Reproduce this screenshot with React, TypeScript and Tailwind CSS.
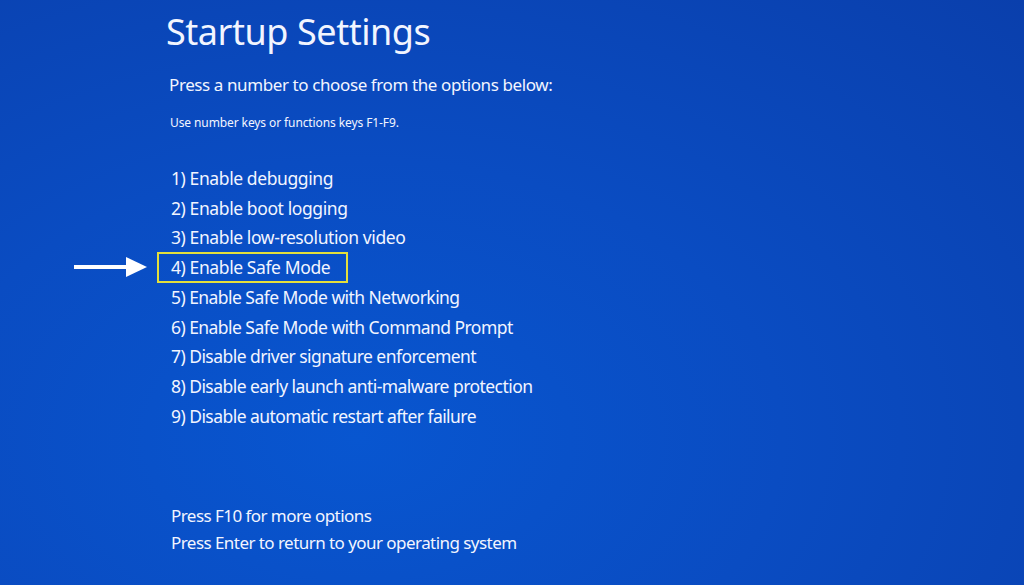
import React from "react";

const options = [
  "1) Enable debugging",
  "2) Enable boot logging",
  "3) Enable low-resolution video",
  "4) Enable Safe Mode",
  "5) Enable Safe Mode with Networking",
  "6) Enable Safe Mode with Command Prompt",
  "7) Disable driver signature enforcement",
  "8) Disable early launch anti-malware protection",
  "9) Disable automatic restart after failure",
];

export default function App() {
  return (
    <div
      className="w-[1024px] h-[585px] overflow-hidden text-[#f2f5ff] bg-[radial-gradient(ellipse_at_35%_75%,#0856d0_0%,#0a4cc2_45%,#0a3fac_100%)]"
      style={{ fontFamily: '"Noto Sans", "Open Sans", sans-serif' }}
    >
      <div className="pl-[166px] pt-[9px] flex flex-col">
        <h1 className="text-[36px] leading-[46px] font-normal tracking-[-0.45px]">Startup Settings</h1>
        <p className="mt-[18px] text-[17px] leading-[24px] tracking-[-0.4px] pl-[3px]">
          Press a number to choose from the options below:
        </p>
        <p className="mt-[17px] text-[12px] leading-[18px] tracking-[-0.1px] pl-[4px]">
          Use number keys or functions keys F1-F9.
        </p>
        <ul className="mt-[31px] flex flex-col pl-[5px]">
          {options.map((o, i) =>
            i === 3 ? (
              <li key={o} className="relative h-[29.75px] flex items-center">
                <span className="absolute left-[-97px] top-1/2 -translate-y-1/2 flex items-center">
                  <span className="block w-[52px] h-[4px] bg-white" />
                  <span className="block w-0 h-0 border-y-[10px] border-y-transparent border-l-[21px] border-l-white" />
                </span>
                <span className="ml-[-14px] border-[2.5px] border-[#e3df3c] h-[31px] w-[191px] flex items-center pl-[12px] text-[17.5px] tracking-[-0.4px]">
                  {o}
                </span>
              </li>
            ) : (
              <li key={o} className={`h-[29.75px] flex items-center text-[17.5px] ${i < 4 ? "tracking-[-0.4px]" : "tracking-[-0.55px]"}`}>
                {o}
              </li>
            )
          )}
        </ul>
        <div className="mt-[71px] flex flex-col pl-[5px] text-[17px] tracking-[-0.55px]">
          <p className="h-[27px] flex items-center">Press F10 for more options</p>
          <p className="h-[27px] flex items-center">Press Enter to return to your operating system</p>
        </div>
      </div>
    </div>
  );
}
